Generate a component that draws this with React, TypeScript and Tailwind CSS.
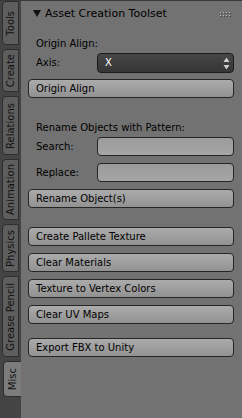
import React from "react";

const font = { fontFamily: '"DejaVu Sans", "Liberation Sans", sans-serif' };

type Tab = { label: string; h: number; active?: boolean };
const tabs: Tab[] = [
  { label: "Tools", h: 44 },
  { label: "Create", h: 43 },
  { label: "Relations", h: 59 },
  { label: "Animation", h: 61 },
  { label: "Physics", h: 48 },
  { label: "Grease Pencil", h: 81 },
  { label: "Misc", h: 36, active: true },
];

function Btn({ label, className = "" }: { label: string; className?: string }) {
  return (
    <div
      className={
        "h-[19px] flex items-center pl-[7px] rounded-[4px] border border-[#262626] bg-linear-to-b from-[#ababab] to-[#929292] text-[10px] text-black leading-none " +
        className
      }
    >
      {label}
    </div>
  );
}

function Field({ label, className = "" }: { label: string; className?: string }) {
  return (
    <div className={"h-[19px] flex items-center " + className}>
      <div className="w-[69px] pl-[8px] text-[10px] text-black leading-none">{label}</div>
      <div className="flex-1 h-[19px] rounded-[4px] border border-[#262626] bg-linear-to-b from-[#9b9b9b] to-[#a6a6a6]" />
    </div>
  );
}

export default function App() {
  return (
    <div
      className="w-[242px] h-[418px] flex bg-[#727272] border-t border-[#3a3a3a] overflow-hidden"
      style={font}
    >
      {/* tab strip */}
      <div className="w-[21px] h-full bg-[#444444] flex flex-col gap-[4px] pt-0">
        {tabs.map((t) => (
          <div
            key={t.label}
            style={{ height: t.h }}
            className={
              t.active
                ? "ml-[3px] w-[18px] rounded-l-[4px] border border-r-0 border-[#2e2e2e] bg-[#7c7c7c] flex items-center justify-center"
                : "ml-[2px] w-[17px] rounded-l-[4px] border border-[#2e2e2e] bg-[#5e5e5e] flex items-center justify-center"
            }
          >
            <span className="[writing-mode:vertical-rl] rotate-180 text-[10px] leading-none text-[#111111] whitespace-nowrap">
              {t.label}
            </span>
          </div>
        ))}
      </div>

      {/* panel */}
      <div className="flex-1 flex flex-col pl-[7px] pr-[8px]">
        {/* header */}
        <div className="h-[24px] flex items-center relative">
          <svg width="8" height="7" viewBox="0 0 8 7" className="ml-[5px]">
            <polygon points="0,0 8,0 4,7" fill="#111" />
          </svg>
          <span className="ml-[4px] text-[11px] leading-none text-black">Asset Creation Toolset</span>
          <svg width="12" height="5" viewBox="0 0 12 5" className="absolute right-[2px] top-[11px]">
            {[0, 3, 6, 9].map((x) => (
              <g key={x}>
                <rect x={x} y={0} width="1" height="1" fill="#b5b5b5" />
                <rect x={x} y={3} width="1" height="1" fill="#b5b5b5" />
                <rect x={x + 1} y={1} width="1" height="1" fill="#3c3c3c" />
                <rect x={x + 1} y={4} width="1" height="1" fill="#3c3c3c" />
              </g>
            ))}
          </svg>
        </div>

        <div className="mt-[9px] h-[19px] flex items-center pl-[8px] text-[10px] text-black leading-none">
          Origin Align:
        </div>

        <div className="h-[20px] flex items-center">
          <div className="w-[69px] pl-[8px] text-[10px] text-black leading-none">Axis:</div>
          <div className="flex-1 h-[20px] rounded-[4px] border border-[#1c1c1c] bg-linear-to-b from-[#474747] to-[#363636] flex items-center pl-[7px] pr-[3px]">
            <span className="flex-1 text-[10px] text-white leading-none">X</span>
            <svg width="7" height="13" viewBox="0 0 7 13">
              <polygon points="0.5,5 3.5,0.5 6.5,5" fill="#cfcfcf" />
              <polygon points="0.5,8 3.5,12.5 6.5,8" fill="#cfcfcf" />
            </svg>
          </div>
        </div>

        <Btn label="Origin Align" className="mt-[6px]" />

        <div className="mt-[20px] h-[19px] flex items-center pl-[8px] text-[10px] text-black leading-none">
          Rename Objects with Pattern:
        </div>

        <Field label="Search:" />
        <Field label="Replace:" className="mt-[7px]" />
        <Btn label="Rename Object(s)" className="mt-[7px]" />

        <Btn label="Create Pallete Texture" className="mt-[19px]" />
        <Btn label="Clear Materials" className="mt-[7px]" />
        <Btn label="Texture to Vertex Colors" className="mt-[7px]" />
        <Btn label="Clear UV Maps" className="mt-[7px]" />

        <Btn label="Export FBX to Unity" className="mt-[14px]" />
      </div>
    </div>
  );
}
